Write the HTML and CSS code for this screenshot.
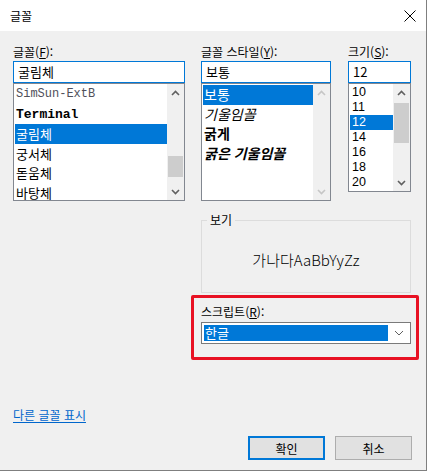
FILE: index.html
```
<!DOCTYPE html>
<html lang="ko">
<head>
    <meta charset="UTF-8">
    <title>글꼴</title>
    <link rel="stylesheet" href="styles.css">
</head>
<body>
    <div class="window">
        <div class="titlebar">
            <span class="title">글꼴</span>
            <svg class="close" width="12" height="12" viewBox="0 0 12 12">
                <path d="M0.5 0.5 L11.5 11.5 M11.5 0.5 L0.5 11.5" stroke="#000" stroke-width="1" fill="none"/>
            </svg>
        </div>
        <div class="content">
            <div class="columns">
                <div class="col col-font">
                    <div class="label">글꼴(<u>F</u>):</div>
                    <div class="input">굴림체</div>
                    <div class="list list-font">
                        <div class="items">
                            <div class="item simsun">SimSun-ExtB</div>
                            <div class="item terminal">Terminal</div>
                            <div class="item selected">굴림체</div>
                            <div class="item">궁서체</div>
                            <div class="item">돋움체</div>
                            <div class="item">바탕체</div>
                        </div>
                        <div class="scrollbar">
                            <svg class="arrow" width="9" height="6" viewBox="0 0 9 6"><path d="M1 5 L4.5 1.5 L8 5" stroke="#606060" stroke-width="1.6" fill="none"/></svg>
                            <div class="track"><div class="thumb thumb-font"></div></div>
                            <svg class="arrow" width="9" height="6" viewBox="0 0 9 6"><path d="M1 1 L4.5 4.5 L8 1" stroke="#606060" stroke-width="1.6" fill="none"/></svg>
                        </div>
                    </div>
                </div>
                <div class="col col-style">
                    <div class="label">글꼴 스타일(<u>Y</u>):</div>
                    <div class="input">보통</div>
                    <div class="list list-style">
                        <div class="items">
                            <div class="item selected">보통</div>
                            <div class="item italic">기울임꼴</div>
                            <div class="item bold">굵게</div>
                            <div class="item bold italic">굵은 기울임꼴</div>
                        </div>
                        <div class="scrollbar disabled">
                            <svg class="arrow" width="9" height="6" viewBox="0 0 9 6"><path d="M1 5 L4.5 1.5 L8 5" stroke="#c6c6c6" stroke-width="1.6" fill="none"/></svg>
                            <div class="track"></div>
                            <svg class="arrow" width="9" height="6" viewBox="0 0 9 6"><path d="M1 1 L4.5 4.5 L8 1" stroke="#c6c6c6" stroke-width="1.6" fill="none"/></svg>
                        </div>
                    </div>
                </div>
                <div class="col col-size">
                    <div class="label">크기(<u>S</u>):</div>
                    <div class="input">12</div>
                    <div class="list list-size">
                        <div class="items">
                            <div class="item">10</div>
                            <div class="item">11</div>
                            <div class="item selected">12</div>
                            <div class="item">14</div>
                            <div class="item">16</div>
                            <div class="item">18</div>
                            <div class="item">20</div>
                        </div>
                        <div class="scrollbar">
                            <svg class="arrow" width="9" height="6" viewBox="0 0 9 6"><path d="M1 5 L4.5 1.5 L8 5" stroke="#606060" stroke-width="1.6" fill="none"/></svg>
                            <div class="track"><div class="thumb thumb-size"></div></div>
                            <svg class="arrow" width="9" height="6" viewBox="0 0 9 6"><path d="M1 1 L4.5 4.5 L8 1" stroke="#606060" stroke-width="1.6" fill="none"/></svg>
                        </div>
                    </div>
                </div>
            </div>

            <div class="lower">
                <fieldset class="preview">
                    <legend>보기</legend>
                    <div class="sample">가나다AaBbYyZz</div>
                </fieldset>
                <div class="highlight">
                    <div class="label">스크립트(<u>R</u>):</div>
                    <div class="combo">
                        <span class="combo-value">한글</span>
                        <svg class="combo-arrow" width="10" height="6" viewBox="0 0 10 6"><path d="M1 1 L5 5 L9 1" stroke="#606060" stroke-width="1" fill="none"/></svg>
                    </div>
                </div>
            </div>

            <a class="more-link" href="#">다른 글꼴 표시</a>

            <div class="buttons">
                <button class="btn btn-default">확인</button>
                <button class="btn">취소</button>
            </div>
        </div>
    </div>
</body>
</html>
```

FILE: styles.css
```
body {
    margin: 0;
    font-family: "Noto Sans CJK KR", "Noto Sans", sans-serif;
    font-size: 12px;
    color: #000000;
    background: #f0f0f0;
}
.window {
    width: 427px;
    height: 471px;
    box-sizing: border-box;
    background: #f0f0f0;
    border-right: 1px solid #7f7f7f;
    border-bottom: 1px solid #7f7f7f;
    overflow: hidden;
}
.titlebar {
    height: 31px;
    background: #ffffff;
    display: flex;
    align-items: center;
    justify-content: space-between;
    padding: 0 10px;
}
.title {
    font-size: 12px;
    line-height: 15px;
}
.content {
    padding-left: 13px;
}
.columns {
    display: flex;
    padding-top: 13px;
}
.col-font {
    width: 172px;
    margin-right: 16px;
}
.col-style {
    width: 130px;
    margin-right: 17px;
}
.col-size {
    width: 63px;
}
.label {
    line-height: 15px;
    height: 15px;
    margin-bottom: 2px;
    white-space: nowrap;
}
.label u {
    text-underline-offset: 1px;
}
.input {
    box-sizing: border-box;
    height: 22px;
    border: 1px solid #0078d7;
    background: #ffffff;
    padding: 0 4px;
    line-height: 20px;
    font-size: 13px;
}
.list {
    box-sizing: border-box;
    border: 1px solid #828790;
    background: #ffffff;
    display: flex;
    padding: 1px 0 0 1px;
    overflow: hidden;
}
.list-font,
.list-style {
    height: 118px;
}
.list-size {
    height: 109px;
}
.items {
    flex: 1;
    overflow: hidden;
}
.item {
    height: 19.5px;
    line-height: 19.5px;
    padding-left: 1px;
    font-size: 14px;
    white-space: nowrap;
}
.list-size .item {
    height: 15px;
    line-height: 15px;
    font-family: "Liberation Sans", Arial, sans-serif;
    font-size: 12.5px;
    padding-left: 2px;
}
.list-font .item {
    font-size: 13px;
}
.item.selected {
    background: #0078d7;
    color: #ffffff;
}
.item.simsun {
    font-family: "Liberation Mono", monospace;
    font-size: 12px;
    color: #50505a;
}
.item.terminal {
    font-family: "Liberation Mono", monospace;
    font-weight: bold;
    font-size: 13px;
}
.italic {
    font-style: italic;
}
.bold {
    font-weight: bold;
}
.scrollbar {
    width: 17px;
    margin-top: -1px;
    background: #f0f0f0;
    display: flex;
    flex-direction: column;
    align-items: center;
    padding: 6px 0 5px;
    box-sizing: border-box;
}
.scrollbar .arrow {
    flex: none;
}
.track {
    flex: 1;
    width: 100%;
    position: relative;
}
.thumb {
    position: absolute;
    left: 1px;
    right: 1px;
    background: #cdcdcd;
}
.thumb-font {
    top: 60px;
    height: 21px;
}
.thumb-size {
    top: 7px;
    height: 40px;
}
.lower {
    margin-left: 178px;
    width: 228px;
}
.preview {
    margin: 12px 8px 0 10px;
    padding: 0;
    height: 80px;
    box-sizing: border-box;
    border: 1px solid #dcdcdc;
    display: flex;
    align-items: center;
    justify-content: center;
}
.preview legend {
    margin-left: 5px;
    padding: 0 3px;
    line-height: 14px;
    font-size: 12px;
}
.sample {
    width: 100%;
    text-align: center;
    font-size: 15px;
    font-weight: 300;
    color: #000000;
    padding-top: 0;
}
.highlight {
    margin-top: 2px;
    height: 65px;
    box-sizing: border-box;
    border: 3px solid #e81123;
    border-radius: 2px;
    padding: 6px 5px 0 7px;
}
.highlight .label {
    margin-bottom: 3px;
}
.combo {
    box-sizing: border-box;
    height: 22px;
    border: 1px solid #7a7a7a;
    background: #ffffff;
    display: flex;
    align-items: center;
    padding: 2px;
}
.combo-value {
    flex: 1;
    height: 16px;
    line-height: 16px;
    background: #0078d7;
    color: #ffffff;
    padding-left: 1px;
    font-size: 13px;
    margin-right: 6px;
}
.combo-arrow {
    margin-right: 4px;
}
.more-link {
    display: inline-block;
    margin-top: 47px;
    line-height: 15px;
    color: #0066cc;
    text-decoration: underline;
    text-underline-offset: 2px;
}
.buttons {
    display: flex;
    justify-content: flex-end;
    gap: 10px;
    margin-top: 13px;
    margin-right: 14px;
}
.btn {
    box-sizing: border-box;
    width: 77px;
    height: 24px;
    background: #e1e1e1;
    border: 1px solid #adadad;
    font-family: "Noto Sans CJK KR", sans-serif;
    font-size: 12px;
    padding: 0;
    color: #000000;
}
.btn-default {
    border: 2px solid #0078d7;
}
```
